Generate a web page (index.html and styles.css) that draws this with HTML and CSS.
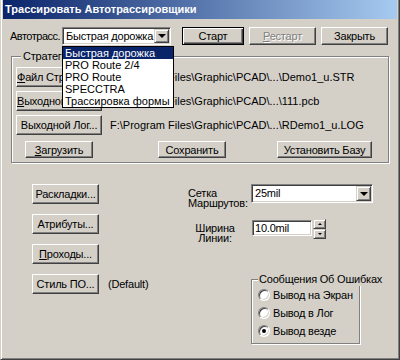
FILE: index.html
```html
<!DOCTYPE html>
<html lang="ru">
<head>
  <meta charset="UTF-8">
  <title>Трассировать Автотрассировщики</title>
  <link rel="stylesheet" href="styles.css">
</head>
<body>
  <div class="window">
    <div class="titlebar">Трассировать Автотрассировщики</div>
    <div class="client">

      <div class="top-row">
        <span class="label">Автотрасс.</span>
        <div class="combo router">
          <span class="combo-text">Быстрая дорожка</span>
          <span class="combo-btn"><i class="arrow-down"></i></span>
          <ul class="dropdown">
            <li class="selected">Быстрая дорожка</li>
            <li>PRO Route 2/4</li>
            <li>PRO Route</li>
            <li>SPECCTRA</li>
            <li>Трассировка формы Pin</li>
          </ul>
        </div>
        <button class="btn default start">Старт</button>
        <button class="btn restart" disabled><u>Р</u>естарт</button>
        <button class="btn close">Закрыть</button>
      </div>

      <div class="group strategy">
        <span class="group-title">Стратегия</span>
        <div class="file-row">
          <button class="btn file-btn"><u>Ф</u>айл Стратегии...</button>
          <span class="path">F:\Program Files\Graphic\PCAD\...\Demo1_u.STR</span>
        </div>
        <div class="file-row">
          <button class="btn file-btn"><u>В</u>ыходной Файл...</button>
          <span class="path">F:\Program Files\Graphic\PCAD\...\111.pcb</span>
        </div>
        <div class="file-row">
          <button class="btn file-btn">Выходной Лог...</button>
          <span class="path">F:\Program Files\Graphic\PCAD\...\RDemo1_u.LOG</span>
        </div>
        <div class="actions">
          <button class="btn load"><u>З</u>агрузить</button>
          <button class="btn save">Сохранить</button>
          <button class="btn set-base">Установить Базу</button>
        </div>
      </div>

      <div class="lower">
        <div class="left-col">
          <div class="opt-row"><button class="btn opt-btn">Раскладки...</button></div>
          <div class="opt-row"><button class="btn opt-btn">Атрибуты...</button></div>
          <div class="opt-row"><button class="btn opt-btn"><u>П</u>роходы...</button></div>
          <div class="opt-row">
            <button class="btn opt-btn">Стиль ПО...</button>
            <span class="style-name">(Default)</span>
          </div>
        </div>

        <div class="right-col">
          <div class="field-row grid-row">
            <span class="field-label">Сетка<br>Маршрутов:</span>
            <div class="combo grid-combo">
              <span class="combo-text">25mil</span>
              <span class="combo-btn"><i class="arrow-down"></i></span>
            </div>
          </div>
          <div class="field-row width-row">
            <span class="field-label centered">Ширина<br>Линии:</span>
            <div class="edit">10.0mil</div>
            <div class="spin">
              <span class="spin-btn"><i class="arrow-up"></i></span>
              <span class="spin-btn"><i class="arrow-down small"></i></span>
            </div>
          </div>

          <div class="group errors">
            <span class="group-title">Сообщения Об Ошибках</span>
            <label class="radio-row"><span class="radio"></span>Вывод на Экран</label>
            <label class="radio-row"><span class="radio"></span>Вывод в Лог</label>
            <label class="radio-row"><span class="radio checked"></span>Вывод везде</label>
          </div>
        </div>
      </div>

    </div>
  </div>
</body>
</html>
```

FILE: styles.css
```css
body {
  margin: 0;
  font-family: "Liberation Sans", Arial, sans-serif;
  font-size: 11px;
  letter-spacing: -0.2px;
  color: #000;
  background: #d4d0c8;
}

.window {
  box-sizing: border-box;
  width: 400px;
  height: 360px;
  padding: 0 2px 2px;
  border: 1px solid;
  border-top: 0;
  border-color: #d4d0c8 #404040 #404040 #d4d0c8;
  box-shadow: inset 1px 0 #fff, inset -1px -1px #808080;
  background: #d4d0c8;
}

.titlebar {
  height: 19px;
  line-height: 19px;
  padding-left: 2px;
  color: #fff;
  font-weight: bold;
  letter-spacing: 0;
  background: linear-gradient(to right, #0a246a, #a6caf0);
}

.client {
  padding-top: 8px;
}

/* buttons */
.btn {
  box-sizing: border-box;
  height: 20px;
  padding: 0;
  font: inherit;
  letter-spacing: inherit;
  color: #000;
  background: #d4d0c8;
  border: 1px solid;
  border-color: #fff #404040 #404040 #fff;
  box-shadow: inset -1px -1px #808080;
  white-space: nowrap;
}

.btn.default {
  border-color: #000;
  box-shadow: inset 1px 1px #fff, inset -1px -1px #404040, inset -2px -2px #808080;
}

.btn:disabled {
  color: #808080;
  text-shadow: 1px 1px #fff;
}

/* top row */
.top-row {
  display: flex;
  align-items: flex-start;
  height: 18px;
  padding-left: 7px;
}

.top-row .label {
  width: 52px;
  line-height: 18px;
  letter-spacing: -0.5px;
  white-space: nowrap;
}

.top-row .btn {
  height: 18px;
  width: 67px;
  margin-left: 5px;
}

.top-row .btn.start {
  width: 62px;
  margin-left: 11px;
}

/* combo / edit */
.combo,
.edit {
  box-sizing: border-box;
  background: #fff;
  border: 1px solid;
  border-color: #808080 #fff #fff #808080;
  box-shadow: inset 1px 1px #404040, inset -1px -1px #d4d0c8;
}

.combo {
  position: relative;
  display: flex;
  padding: 1px;
}

.combo-text {
  flex: 1;
  padding-left: 2px;
  white-space: nowrap;
}

.combo-btn,
.spin-btn {
  box-sizing: border-box;
  display: flex;
  align-items: center;
  justify-content: center;
  background: #d4d0c8;
  border: 1px solid;
  border-color: #d4d0c8 #404040 #404040 #d4d0c8;
  box-shadow: inset 1px 1px #fff, inset -1px -1px #808080;
}

.combo-btn {
  width: 15px;
}

.arrow-down,
.arrow-up {
  width: 0;
  height: 0;
  border-left: 4px solid transparent;
  border-right: 4px solid transparent;
}

.arrow-down {
  border-top: 4px solid #000;
}

.arrow-up {
  border-bottom: 2px solid #000;
  border-left-width: 2px;
  border-right-width: 2px;
}

.arrow-down.small {
  border-top-width: 2px;
  border-left-width: 2px;
  border-right-width: 2px;
}

.router {
  width: 109px;
  height: 18px;
  line-height: 14px;
}

.dropdown {
  position: absolute;
  top: 18px;
  left: -1px;
  z-index: 5;
  width: 110px;
  margin: 0;
  padding: 0;
  list-style: none;
  background: #fff;
  border: 1px solid #000;
  letter-spacing: 0;
}

.dropdown li {
  height: 12px;
  line-height: 12px;
  padding-left: 2px;
  white-space: nowrap;
  overflow: hidden;
}

.dropdown li.selected {
  background: #0a246a;
  color: #fff;
}

/* group boxes */
.group {
  box-sizing: border-box;
  border: 1px solid #808080;
  box-shadow: inset 1px 1px #fff, 1px 1px #fff;
}

.group-title {
  display: table;
  margin: -7px 0 0 5px;
  padding: 0 2px;
  line-height: 13px;
  white-space: nowrap;
  background: #d4d0c8;
}

.strategy {
  width: 378px;
  margin: 11px 0 0 8px;
  padding: 0 0 4px 4px;
}

.file-row {
  display: flex;
  align-items: center;
  margin-top: 4px;
}

.file-row .btn {
  width: 86px;
}

.path {
  margin-left: 8px;
  white-space: nowrap;
  letter-spacing: 0;
}

.actions {
  display: flex;
  margin-top: 6px;
}

.actions .btn {
  height: 17px;
  width: 68px;
}

.actions .load {
  margin-left: 9px;
}

.actions .save {
  margin-left: 65px;
}

.actions .set-base {
  width: 95px;
  margin-left: 51px;
}

/* lower part */
.lower {
  display: flex;
  margin-top: 21px;
}

.left-col {
  display: flex;
  flex-direction: column;
  gap: 10px;
  width: 156px;
  margin-left: 29px;
}

.opt-row {
  display: flex;
  align-items: center;
}

.opt-btn {
  width: 67px;
}

.style-name {
  margin-left: 9px;
}

.right-col {
  display: flex;
  flex-direction: column;
}

.field-row {
  display: flex;
  align-items: flex-start;
}

.field-label {
  box-sizing: border-box;
  width: 63px;
  line-height: 10px;
  padding-top: 4px;
}

.field-label.centered {
  text-align: center;
  padding-right: 9px;
}

.grid-combo {
  width: 122px;
  height: 19px;
  line-height: 15px;
}

.width-row {
  margin-top: 11px;
}

.edit {
  width: 60px;
  height: 16px;
  margin: 1px 0 0 1px;
  padding-left: 2px;
  line-height: 14px;
}

.spin {
  display: flex;
  flex-direction: column;
  width: 13px;
  height: 20px;
  margin-left: 1px;
}

.spin-btn {
  height: 10px;
}

.errors {
  width: 109px;
  height: 65px;
  margin: 36px 0 0 63px;
  padding-left: 6px;
}

.errors .group-title {
  margin-left: 0;
  padding: 0 1px;
}

.radio-row {
  display: flex;
  align-items: center;
  height: 18px;
}

.radio {
  position: relative;
  box-sizing: border-box;
  width: 12px;
  height: 12px;
  margin-right: 3px;
  border-radius: 50%;
  background: #fff;
  border: 1px solid;
  border-color: #808080 #fff #fff #808080;
  box-shadow: inset 1px 1px #404040, inset -1px -1px #d4d0c8;
}

.radio.checked::after {
  content: "";
  position: absolute;
  top: 3px;
  left: 3px;
  width: 4px;
  height: 4px;
  border-radius: 50%;
  background: #000;
}
```
